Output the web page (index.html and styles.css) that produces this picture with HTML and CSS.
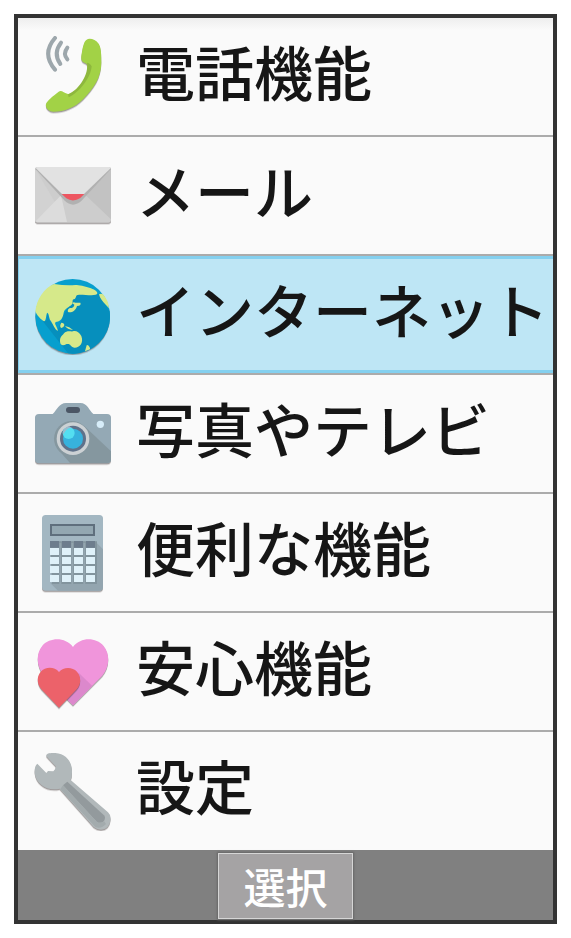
FILE: index.html
```
<!DOCTYPE html>
<html lang="ja">
    <head>
        <meta charset="UTF-8" />
        <meta name="viewport" content="width=device-width, initial-scale=1.0" />
        <title>メニュー</title>
        <link rel="stylesheet" href="styles.css">
    </head>
    <body>
        <main class="screen">
            <nav class="menu">
                <a class="item" href="#phone">
                    <svg class="icon" viewBox="99 108 243 243" aria-hidden="true">
                        <g fill="none" stroke="#9da7ac" stroke-width="12" stroke-linecap="round">
                            <path d="M165 114Q124 161 165 209" />
                            <path d="M183 128Q158 160 181 192" />
                            <path d="M202 143Q188 161 202 178" />
                        </g>
                        <path class="lift" fill="#a2d246" d="M260 119C268 113 287 118 296 131C303 142 304 157 304 187C304 231 283 264 250 297C224 323 194 335 160 335C147 335 135 323 138 312C141 302 158 289 176 275C184 269 190 278 206 283C235 273 257 240 262 215C264 199 263 193 255 189C244 185 241 181 246 155C249 139 252 124 260 119Z" />
                        <path fill="#8eb83d" d="M261 188Q269 188 275 199C273 232 239 277 206 292L204 283C239 268 267 221 261 188Z" />
                    </svg>
                    <span class="label">電話機能</span>
                </a>
                <a class="item" href="#mail">
                    <svg class="icon" viewBox="99 45 243 243" aria-hidden="true">
                        <rect class="lift" x="105" y="81" width="228" height="167" rx="8" fill="#cdcdcd" />
                        <path fill="#d2d2d2" d="M105 85L200 246H112Q105 246 105 239Z" />
                        <path fill="#c2c2c2" d="M331 85L254 163L333 238V90Z" />
                        <path fill="#dcdcdc" d="M107 244L183 166L201 246H112Z" />
                        <path fill="#b1b1b1" d="M107 88L193 181Q219 207 246 181L332 88V83H107Z" />
                        <path fill="#e2e2e2" d="M107 84Q109 81 113 81H326Q330 81 332 85L252 162H186Z" />
                        <path fill="#ed5661" d="M185 162H253L241 174Q219 188 199 175Z" />
                    </svg>
                    <span class="label">メール</span>
                </a>
                <a class="item selected" href="#internet" aria-current="true">
                    <svg class="icon" viewBox="99 78 243 243" aria-hidden="true">
                        <circle class="lift" cx="218" cy="205" r="112" fill="#079fce" />
                        <path fill="#068fbd" d="M128 219L204 316A112 112 0 0 0 329 190L295 137L230 138L190 200L173 248L150 219L142 195L139 218Z" />
                        <g fill="#d6e98a">
                            <path d="M162 108Q200 114 226 111C249 112 293 123 292 136C291 145 263 141 239 140C223 139 232 151 221 154C215 156 220 164 216 169C207 179 194 181 191 194C188 213 180 219 171 221C159 223 169 231 174 248C164 247 158 225 151 217C147 210 147 196 142 194C137 199 140 218 132 220C123 215 110 202 106 190C110 154 132 120 162 108Z" />
                            <path d="M297 139Q303 136 309 139Q326 158 327 181L318 171Q300 154 297 139Z" />
                            <path d="M217 166Q220 161 226 164L241 164Q244 170 237 173L231 174C227 189 213 196 204 192Q201 184 210 180Q222 180 223 170Z" />
                            <path d="M184 224Q193 224 193 232Q191 240 184 240Q177 235 184 224ZM195 234Q208 235 219 246Q202 245 195 234Z" />
                            <path d="M180 277C181 264 188 263 192 256C201 245 216 253 221 249Q234 247 244 264C252 286 238 300 223 299C209 295 213 286 200 288Q179 299 180 277Z" />
                            <path d="M260 292Q265 289 270 300V304L255 310Z" />
                        </g>
                    </svg>
                    <span class="label">インターネット</span>
                </a>
                <a class="item" href="#photo">
                    <svg class="icon" viewBox="99 30 243 243" aria-hidden="true">
                        <path class="lift" fill="#94a9b5" d="M117 93H158C171 81 177 60 198 60H241C262 60 267 82 280 93H321Q333 93 333 105V229Q333 241 321 241H117Q105 241 105 229V105Q105 93 117 93Z" />
                        <path fill="#85979f" d="M175 200L210 240H321Q333 240 333 229V205L252 128Z" />
                        <circle cx="215" cy="167" r="53" fill="#85979f" />
                        <circle cx="219" cy="167" r="49" fill="#ccd1d4" />
                        <circle cx="219" cy="167" r="39" fill="#5f718a" />
                        <circle cx="219" cy="167" r="30" fill="#37b2dd" />
                        <circle cx="206" cy="150" r="18" fill="#54def0" />
                        <path fill="#9fb9ca" d="M188 150Q192 133 207 130L216 135Q202 130 190 154Z" />
                        <rect x="198" y="72" width="42" height="18" rx="9" fill="#4b5665" />
                        <circle cx="301" cy="124" r="11" fill="#d7edf9" />
                    </svg>
                    <span class="label">写真やテレビ</span>
                </a>
                <a class="item" href="#tools">
                    <svg class="icon" viewBox="99 42 243 243" aria-hidden="true">
                        <rect class="lift" x="126" y="51" width="183" height="227" rx="11" fill="#a3b7c2" />
                        <path fill="#93a5af" d="M150 254L174 278H298Q309 278 309 267V154L285 130V252Z" />
                        <rect x="153" y="81" width="129" height="30" fill="#93a7b1" stroke="#5f6f7d" stroke-width="6" />
                        <path fill="#82949d" d="M150 130H291V258H156Z" />
                        <path fill="#6d7d8d" d="M150 129h27v20h-27zM186 129h27v20h-27zM222 129h27v20h-27zM258 129h27v20h-27z" />
                        <path fill="none" stroke="#93a5af" stroke-width="6" d="M181 134V258M217 134V258M253 134V258" />
                        <g fill="#dff1f9">
                            <path d="M150 150h27v21h-27zM186 150h27v21h-27zM222 150h27v21h-27zM258 150h27v21h-27z" />
                            <path d="M150 177h27v21h-27zM186 177h27v21h-27zM222 177h27v21h-27zM258 177h27v21h-27z" />
                            <path d="M150 204h27v21h-27zM186 204h27v21h-27zM222 204h27v21h-27zM258 204h27v21h-27z" />
                            <path d="M150 231h27v21h-27zM186 231h27v21h-27zM222 231h27v21h-27zM258 231h27v21h-27z" />
                        </g>
                    </svg>
                    <span class="label">便利な機能</span>
                </a>
                <a class="item" href="#safety">
                    <svg class="icon" viewBox="99 48 243 243" aria-hidden="true">
                        <path class="lift" fill="#f095db" d="M219 96C196 66 151 66 127 92C106 118 110 156 132 183L219 271L307 182C329 155 331 118 311 93C287 66 242 66 219 96Z" />
                        <path fill="#dc88cc" d="M236 173L277 213L219 271L202 254Z" />
                        <path class="lift" fill="#ec626a" d="M177 171C163 154 136 155 122 170C109 186 111 207 124 223L177 278L230 223C244 207 244 185 231 170C217 155 190 155 177 171Z" />
                    </svg>
                    <span class="label">安心機能</span>
                </a>
                <a class="item" href="#settings">
                    <svg class="icon" viewBox="99 60 243 243" aria-hidden="true">
                        <path class="lift" fill="#b1b8ba" d="M139 79C137 69 151 68 166 69C200 71 218 99 216 128Q216 141 212 150L324 247Q334 256 331 272Q328 297 303 299Q291 299 281 291L179 176C144 185 108 164 104 129Q103 107 112 101L139 129L144 123L160 124Q168 119 167 109Z" />
                        <path fill="#939a9d" d="M202 155L312 256Q318 263 312 273Q302 283 290 275L189 166Z" />
                        <path fill="#a3abad" d="M189 166L290 275Q302 283 312 273L318 282Q304 298 286 291L181 177Z" />
                    </svg>
                    <span class="label">設定</span>
                </a>
            </nav>
            <footer class="softkeys">
                <button class="select" type="button">選択</button>
            </footer>
        </main>
    </body>
</html>
```

FILE: styles.css
```
body {
    margin: 0;
    padding: 14px;
    background-color: white;
    font-family: "Noto Sans CJK JP", sans-serif;
}
.screen {
    border: 4px solid #333;
    background-color: #fafafa;
}
.menu {
    display: flex;
    flex-direction: column;
    background-image: linear-gradient(#eee, #fafafa 12px);
}
.item {
    display: flex;
    align-items: center;
    gap: 22px;
    padding: 18px 0 18px 15px;
    border-bottom: 2px solid #ababab;
    color: #161616;
    text-decoration: none;
}
.item:last-of-type {
    border-bottom: 0;
    padding-bottom: 19px;
}
.selected {
    background-color: #bee6f5;
    box-shadow: inset 0 3px #84d0ef, inset 0 -3px #84d0ef, inset 1px 0 #84d0ef;
}
.icon {
    flex: none;
    width: 81px;
    height: 81px;
}
.lift {
    filter: drop-shadow(0 4px 2px rgba(70, 60, 60, 0.5));
}
.label {
    padding-bottom: 12px;
    font-size: 59px;
    font-weight: 500;
    line-height: 69px;
    white-space: nowrap;
}
.softkeys {
    display: flex;
    justify-content: center;
    padding: 3px 0 1px;
    background-color: #808080;
}
.select {
    padding: 0 24px;
    border: 1px solid #d6d6d6;
    background-color: #a5a3a4;
    box-shadow: 0 0 2px 1px #666;
    color: white;
    font-family: inherit;
    font-size: 42px;
    font-weight: 500;
    line-height: 64px;
}
```
